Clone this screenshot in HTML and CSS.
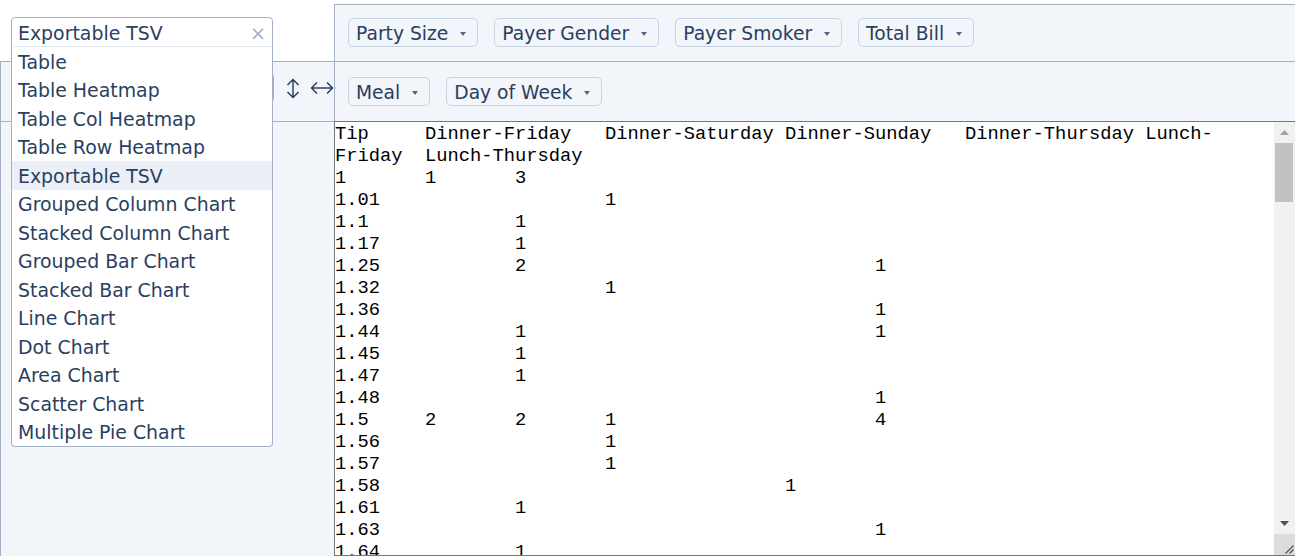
FILE: index.html
```html
<!DOCTYPE html>
<html lang="en">
<head>
<meta charset="utf-8">
<title>Pivot Table</title>
<link rel="stylesheet" href="styles.css">
</head>
<body>
<div class="pvt">
  <div class="cell renderers">
    <div class="dropdown">
      <div class="dd-current open"><span class="dd-value">Exportable TSV</span><span class="dd-close">×</span></div>
      <div class="dd-menu">
        <div class="dd-item">Table</div>
        <div class="dd-item">Table Heatmap</div>
        <div class="dd-item">Table Col Heatmap</div>
        <div class="dd-item">Table Row Heatmap</div>
        <div class="dd-item active">Exportable TSV</div>
        <div class="dd-item">Grouped Column Chart</div>
        <div class="dd-item">Stacked Column Chart</div>
        <div class="dd-item">Grouped Bar Chart</div>
        <div class="dd-item">Stacked Bar Chart</div>
        <div class="dd-item">Line Chart</div>
        <div class="dd-item">Dot Chart</div>
        <div class="dd-item">Area Chart</div>
        <div class="dd-item">Scatter Chart</div>
        <div class="dd-item">Multiple Pie Chart</div>
      </div>
    </div>
  </div>
  <div class="cell axis unused">
    <span class="attr">Party Size<span class="tri"></span></span>
    <span class="attr">Payer Gender<span class="tri"></span></span>
    <span class="attr">Payer Smoker<span class="tri"></span></span>
    <span class="attr">Total Bill<span class="tri"></span></span>
  </div>
  <div class="cell vals">
    <div class="agg"></div>
    <a class="order row-order" title="Sort rows"><svg width="14" height="21" viewBox="0 0 14 21"><path d="M7 1.5V19.5M1.5 7L7 1.5L12.5 7M1.5 14L7 19.5L12.5 14" fill="none" stroke="#2a3f5f" stroke-width="1.5"/></svg></a>
    <a class="order col-order" title="Sort columns"><svg width="24" height="14" viewBox="0 0 24 14"><path d="M1 7H23M7 1.5L1.5 7L7 12.5M17 1.5L22.5 7L17 12.5" fill="none" stroke="#2a3f5f" stroke-width="1.5"/></svg></a>
  </div>
  <div class="cell axis cols">
    <span class="attr">Meal<span class="tri"></span></span>
    <span class="attr">Day of Week<span class="tri"></span></span>
  </div>
  <div class="cell axis rows"></div>
  <div class="cell output">
    <textarea class="tsv" readonly>Tip&#9;Dinner-Friday&#9;Dinner-Saturday&#9;Dinner-Sunday&#9;Dinner-Thursday&#9;Lunch-Friday&#9;Lunch-Thursday
1&#9;1&#9;3
1.01&#9;&#9;&#9;1
1.1&#9;&#9;1
1.17&#9;&#9;1
1.25&#9;&#9;2&#9;&#9;&#9;&#9;1
1.32&#9;&#9;&#9;1
1.36&#9;&#9;&#9;&#9;&#9;&#9;1
1.44&#9;&#9;1&#9;&#9;&#9;&#9;1
1.45&#9;&#9;1
1.47&#9;&#9;1
1.48&#9;&#9;&#9;&#9;&#9;&#9;1
1.5&#9;2&#9;2&#9;1&#9;&#9;&#9;4
1.56&#9;&#9;&#9;1
1.57&#9;&#9;&#9;1
1.58&#9;&#9;&#9;&#9;&#9;1
1.61&#9;&#9;1
1.63&#9;&#9;&#9;&#9;&#9;&#9;1
1.64&#9;&#9;1
1.66&#9;&#9;&#9;&#9;&#9;&#9;1
1.67&#9;&#9;&#9;1
1.68&#9;&#9;&#9;&#9;1
1.71&#9;&#9;1
1.73&#9;&#9;&#9;1
1.75&#9;&#9;1&#9;&#9;&#9;&#9;1
1.76&#9;&#9;&#9;&#9;1
1.8&#9;&#9;&#9;&#9;&#9;&#9;1
1.83&#9;&#9;&#9;&#9;&#9;&#9;1
1.92&#9;&#9;&#9;1
1.96&#9;&#9;&#9;&#9;&#9;&#9;1
1.97&#9;&#9;1
1.98&#9;&#9;&#9;&#9;&#9;&#9;1
2&#9;1&#9;8&#9;6&#9;1&#9;1&#9;10
2.01&#9;&#9;1&#9;&#9;&#9;&#9;1
2.02&#9;&#9;1
2.03&#9;&#9;1&#9;1
2.05&#9;&#9;&#9;&#9;&#9;&#9;1
2.09&#9;&#9;1
2.18&#9;&#9;&#9;&#9;&#9;&#9;1
2.2&#9;&#9;&#9;&#9;&#9;1&#9;1
2.23&#9;&#9;1
2.24&#9;&#9;&#9;1
2.31&#9;&#9;1
2.34&#9;&#9;&#9;1
2.45&#9;&#9;1
2.47&#9;&#9;&#9;1
2.5&#9;&#9;2&#9;1&#9;&#9;&#9;1
2.52&#9;&#9;&#9;1
2.54&#9;&#9;&#9;&#9;&#9;&#9;1
2.55&#9;&#9;&#9;1
2.56&#9;&#9;&#9;&#9;&#9;&#9;1
2.6&#9;&#9;1
2.61&#9;&#9;&#9;&#9;&#9;&#9;1
2.64&#9;&#9;1
2.71&#9;&#9;&#9;1
2.72&#9;&#9;1
2.74&#9;&#9;&#9;1
2.75&#9;&#9;1&#9;&#9;&#9;1
2.83&#9;&#9;&#9;&#9;&#9;&#9;1
2.88&#9;&#9;&#9;&#9;&#9;&#9;1
2.9&#9;&#9;&#9;1
2.91&#9;&#9;&#9;1
2.92&#9;&#9;1
2.93&#9;&#9;1
3&#9;1&#9;10&#9;5&#9;&#9;1&#9;6
3.02&#9;&#9;1
3.06&#9;&#9;&#9;1
3.07&#9;&#9;1
3.08&#9;&#9;1
3.09&#9;&#9;&#9;&#9;&#9;1
3.11&#9;&#9;&#9;1
3.12&#9;&#9;&#9;1
3.14&#9;&#9;&#9;1
3.15&#9;&#9;&#9;1
3.16&#9;&#9;1
3.18&#9;&#9;&#9;1
3.21&#9;&#9;&#9;1
3.23&#9;&#9;&#9;&#9;&#9;&#9;1
3.25&#9;1&#9;&#9;1
3.27&#9;&#9;1
3.31&#9;&#9;&#9;1
3.35&#9;&#9;1
3.39&#9;&#9;1
3.4&#9;&#9;1
3.41&#9;&#9;1
3.48&#9;&#9;1&#9;&#9;&#9;&#9;1
3.5&#9;&#9;3&#9;3
3.51&#9;&#9;&#9;1
3.55&#9;&#9;&#9;1
3.6&#9;&#9;1
3.61&#9;&#9;1
3.68&#9;&#9;&#9;1
3.71&#9;&#9;&#9;1
3.76&#9;&#9;&#9;1
3.92&#9;&#9;&#9;1
4&#9;1&#9;4&#9;4&#9;&#9;&#9;3
4.06&#9;&#9;&#9;1
4.08&#9;&#9;1
4.19&#9;&#9;&#9;&#9;&#9;&#9;1
4.2&#9;&#9;&#9;&#9;&#9;&#9;1
4.29&#9;&#9;1
4.3&#9;&#9;1
4.34&#9;&#9;&#9;1
4.5&#9;&#9;&#9;1
4.67&#9;&#9;1
4.71&#9;&#9;1
4.73&#9;1
5&#9;&#9;4&#9;3&#9;&#9;&#9;2
5.07&#9;&#9;1
5.14&#9;&#9;&#9;&#9;&#9;&#9;1
5.16&#9;&#9;&#9;1
5.17&#9;&#9;&#9;&#9;&#9;&#9;1
5.2&#9;&#9;&#9;1
5.6&#9;&#9;&#9;1
5.65&#9;&#9;&#9;1
5.85&#9;&#9;&#9;&#9;&#9;&#9;1
5.92&#9;&#9;1
6&#9;&#9;1&#9;1&#9;&#9;&#9;1
6.5&#9;&#9;&#9;1
6.7&#9;&#9;&#9;&#9;&#9;&#9;1
6.73&#9;&#9;1
7.58&#9;&#9;1
9&#9;&#9;1
10&#9;&#9;1</textarea>
    <div class="vscroll" aria-hidden="true">
      <div class="sb-btn"><svg width="9" height="5" viewBox="0 0 9 5"><polygon points="0,5 4.5,0 9,5" fill="#a3a3a3"/></svg></div>
      <div class="sb-track"><div class="sb-thumb"></div></div>
      <div class="sb-btn"><svg width="9" height="5" viewBox="0 0 9 5"><polygon points="0,0 9,0 4.5,5" fill="#505050"/></svg></div>
      <div class="sb-corner"><svg width="10" height="10" viewBox="0 0 10 10"><path d="M9.5 1.5L1.5 9.5M9.5 5.5L5.5 9.5" stroke="#505050" stroke-width="1.2" fill="none"/></svg></div>
    </div>
  </div>
</div>
</body>
</html>
```

FILE: styles.css
```css
html, body {
  margin: 0;
  padding: 0;
  overflow: hidden;
  background: #ffffff;
}

body {
  font-family: "DejaVu Sans", Verdana, sans-serif;
  font-size: 18.9px;
  color: #2a3f5f;
}

.pvt {
  display: grid;
  grid-template-columns: 334px 962px;
  grid-template-rows: 57px 60px 435px;
  padding-top: 4px;
}

.cell {
  box-sizing: border-box;
  background: #f2f5fa;
  border: 0 solid #a2b1c6;
}

.renderers {
  background: #ffffff;
  padding: 13px 0 0 11px;
  position: relative;
  z-index: 5;
}

.dropdown {
  position: relative;
  width: 262px;
}

.dd-current {
  box-sizing: border-box;
  height: 30px;
  border: 1px solid #a2b1c6;
  border-radius: 4px 4px 0 0;
  background: #ffffff;
  padding: 4px 6px 2px;
  line-height: 22px;
  display: flex;
  justify-content: space-between;
}

.dd-close {
  color: #a2b1c6;
  font-size: 19px;
}

.dd-menu {
  position: absolute;
  top: 100%;
  left: 0;
  width: 100%;
  margin-top: -1px;
  box-sizing: border-box;
  background: #ffffff;
  border: 1px solid #a2b1c6;
  border-top-color: #dfe8f3;
  border-radius: 0 0 4px 4px;
  z-index: 10;
}

.dd-item {
  padding: 3.75px 6px 2.75px;
  line-height: 22px;
  white-space: nowrap;
}

.dd-item.active {
  background: #ebf0f8;
}

.axis {
  display: flex;
  align-items: flex-start;
  gap: 16px;
}

.unused {
  border-top-width: 1px;
  border-left-width: 1px;
  border-right-width: 1px;
  padding: 13px 0 0 13px;
}

.vals {
  border-top-width: 1px;
  border-left-width: 1px;
  padding: 11px 0 0 10px;
  display: flex;
  align-items: flex-start;
}

.agg {
  box-sizing: border-box;
  width: 263px;
  height: 29px;
  border: 1px solid #a2b1c6;
  border-radius: 4px;
  background: #ffffff;
}

.order {
  display: flex;
  align-items: center;
  justify-content: center;
  cursor: pointer;
}

.row-order {
  margin: 5px 0 0 12px;
}

.col-order {
  margin: 8px 0 0 10px;
}

.cols {
  border-top-width: 1px;
  border-left-width: 1px;
  padding: 15px 0 0 13px;
}

.rows {
  border-top-width: 1px;
  border-left-width: 1px;
}

.output {
  background: #ffffff;
  position: relative;
}

.attr {
  box-sizing: border-box;
  display: inline-flex;
  align-items: center;
  height: 29px;
  padding: 2px 11px 0 7px;
  border: 1px solid #c8d4e3;
  border-radius: 5px;
  background: #f2f5fa;
  white-space: nowrap;
  line-height: 22px;
  font-size: 18.7px;
  cursor: move;
}

.tri {
  display: inline-block;
  width: 0;
  height: 0;
  margin-left: 12px;
  border-left: 3px solid transparent;
  border-right: 3px solid transparent;
  border-top: 4px solid #506784;
}

.tsv {
  display: block;
  box-sizing: border-box;
  width: 962px;
  height: 435px;
  margin: 0;
  padding: 1px 21px 0 0;
  border: 1px solid #767676;
  font-family: "Liberation Mono", "Courier New", monospace;
  font-size: 18.75px;
  line-height: 22px;
  tab-size: 8;
  color: #000000;
  background: #ffffff;
  resize: none;
  overflow: hidden;
}

.vscroll {
  position: absolute;
  top: 1px;
  right: 1px;
  bottom: 1px;
  width: 21px;
  display: flex;
  flex-direction: column;
  background: #f1f1f1;
}

.sb-btn {
  height: 21px;
  flex: none;
  display: flex;
  align-items: center;
  justify-content: center;
}

.sb-track {
  flex: 1;
}

.sb-thumb {
  height: 59px;
  margin: 0 2px 0 1px;
  background: #c1c1c1;
}

.sb-corner {
  height: 21px;
  flex: none;
  background: #dcdcdc;
  display: flex;
  align-items: flex-end;
  justify-content: flex-end;
  padding: 0 1px 1px 0;
  box-sizing: border-box;
}
```
